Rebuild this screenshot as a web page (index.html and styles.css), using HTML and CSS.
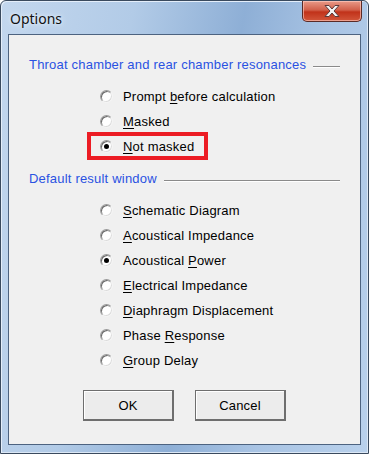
FILE: index.html
```html
<!doctype html>
<html>

<head>
    <title>Options</title>
    <meta charset="utf-8" />
    <link rel="stylesheet" href="styles.css">
</head>

<body>
    <div class="window">
        <div class="titlebar">
            <span class="title">Options</span>
            <button class="close" aria-label="Close">
                <svg width="20" height="14" viewBox="0 0 20 14">
                    <path d="M3 1.5 L7 1.5 L10 5 L13 1.5 L17 1.5 L12 7 L17 12.5 L13 12.5 L10 9 L7 12.5 L3 12.5 L8 7 Z"
                        fill="#f4f4f4" stroke="#5a3a3a" stroke-width="1" stroke-linejoin="round" />
                </svg>
            </button>
        </div>
        <div class="client">
            <div class="group">
                <div class="group-head"><span>Throat chamber and rear chamber resonances</span><i class="rule"></i></div>
                <ul class="options">
                    <li><span class="radio"></span><span>Prompt <u>b</u>efore calculation</span></li>
                    <li><span class="radio"></span><span><u>M</u>asked</span></li>
                    <li class="highlight"><span class="radio checked"></span><span><u>N</u>ot masked</span></li>
                </ul>
            </div>
            <div class="group">
                <div class="group-head"><span>Default result window</span><i class="rule"></i></div>
                <ul class="options">
                    <li><span class="radio"></span><span><u>S</u>chematic Diagram</span></li>
                    <li><span class="radio"></span><span><u>A</u>coustical Impedance</span></li>
                    <li><span class="radio checked"></span><span>Acoustical <u>P</u>ower</span></li>
                    <li><span class="radio"></span><span><u>E</u>lectrical Impedance</span></li>
                    <li><span class="radio"></span><span><u>D</u>iaphragm Displacement</span></li>
                    <li><span class="radio"></span><span>Phase <u>R</u>esponse</span></li>
                    <li><span class="radio"></span><span><u>G</u>roup Delay</span></li>
                </ul>
            </div>
            <div class="buttons">
                <button class="btn">OK</button>
                <button class="btn">Cancel</button>
            </div>
        </div>
    </div>
</body>

</html>
```

FILE: styles.css
```css
html, body { margin: 0; height: 100%; background: #ffffff; }
body { font-family: "Liberation Sans", Arial, sans-serif; font-size: 13px; letter-spacing: 0.2px; color: #000; }

.window { box-sizing: border-box; width: 369px; height: 454px; display: flex; flex-direction: column; padding: 0 7px 8px 7px; border: 1px solid #3a4a5e; border-radius: 6px 6px 0 0; background: linear-gradient(100deg, #c3d7ee 0%, #b2cbe7 30%, #8eafd6 55%, #a9c4e4 75%, #b9d1ec 100%); box-shadow: inset 1px 1px 0 #e4eefa, inset -1px -1px 0 #dbe7f5; }
.titlebar { height: 33px; display: flex; justify-content: space-between; align-items: flex-start; }
.title { font-family: "Noto Sans", sans-serif; font-size: 14px; letter-spacing: 0; margin: 8px 0 0 2px; color: #111; text-shadow: 0 0 6px #e6f0fb, 0 0 3px #e6f0fb; }
.close { width: 60px; height: 21px; margin-right: -1px; padding: 0; border: 1px solid #5a2a26; border-top: 0; border-radius: 0 0 5px 5px; background: linear-gradient(#e99a88 0%, #d2604a 45%, #c1321a 55%, #d2563a 100%); box-shadow: inset 0 0 0 1px rgba(255, 210, 200, 0.6); display: flex; align-items: center; justify-content: center; }

.client { flex: 1; border: 1px solid #4d6380; background: #f0f0f0; padding-top: 21px; display: flex; flex-direction: column; }

.group-head { display: flex; align-items: center; height: 16px; padding: 0 20px; color: #2a52e2; }
.group-head .rule { flex: 1; height: 1px; margin: 6px 0 0 7px; background: #8a8a8a; border-bottom: 1px solid #ffffff; }

.options { list-style: none; margin: 12px 0 11px 0; padding: 0 0 0 91px; }
.options li { display: flex; align-items: center; height: 25px; width: fit-content; }
.options li u { text-decoration-thickness: 1px; text-underline-offset: 2px; }
.highlight { position: relative; }
.highlight::after { content: ""; position: absolute; top: -2px; bottom: -1px; left: -13px; right: -14px; border: 4px solid #ec1c24; }

.radio { position: relative; box-sizing: border-box; width: 13px; height: 13px; margin-right: 10px; border-radius: 50%; border: 1px solid; border-color: #9a9a9a #f4f4f4 #f4f4f4 #9a9a9a; background: #ffffff; box-shadow: inset 1px 1px 0 #6a6a6a, inset -1px -1px 0 #dcdcdc; }
.radio.checked::after { content: ""; position: absolute; left: 3px; top: 3px; width: 5px; height: 5px; border-radius: 50%; background: #000; }

.buttons { display: flex; justify-content: center; gap: 21px; margin-top: 6px; }
.btn { box-sizing: border-box; width: 91px; height: 31px; font-family: "Liberation Sans", Arial, sans-serif; font-size: 13px; letter-spacing: 0.2px; color: #000; background: #ececec; border: 1px solid #6e6e6e; border-right-width: 2px; border-bottom-width: 2px; box-shadow: inset 1px 1px 0 #ffffff; padding: 0; }
```
